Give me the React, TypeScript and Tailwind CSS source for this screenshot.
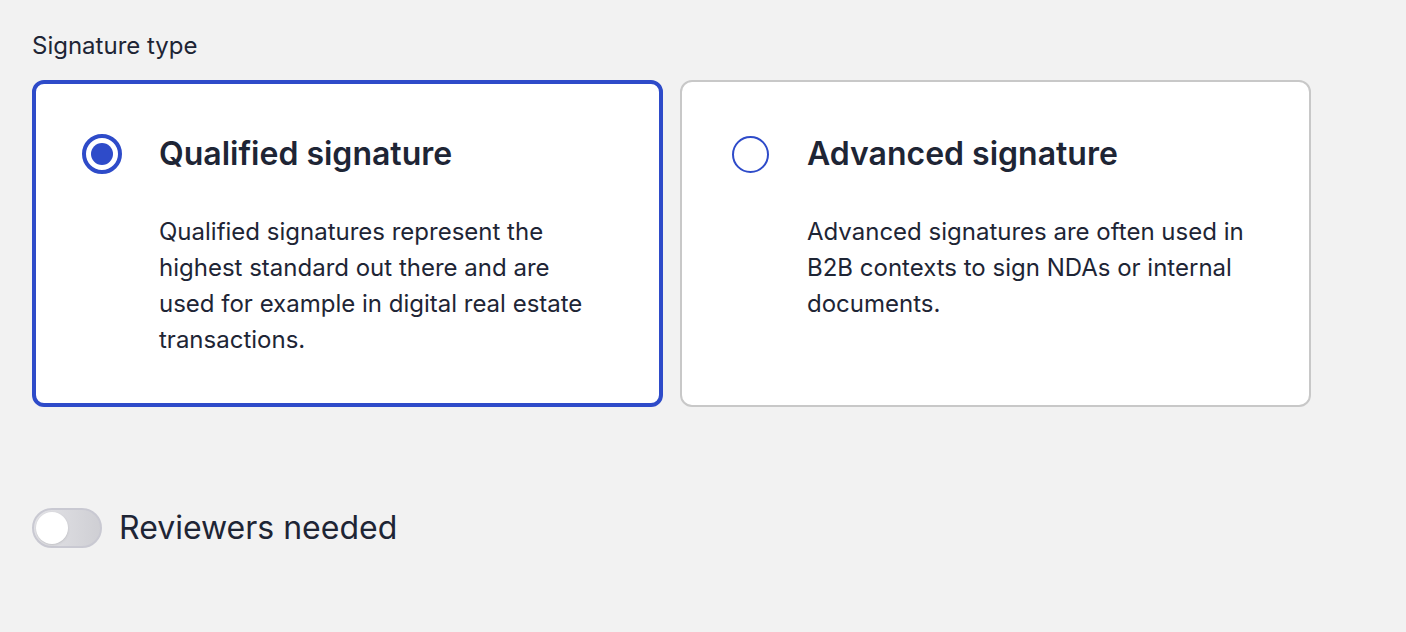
import { useState } from "react";

type Option = {
  id: string;
  title: string;
  body: string;
};

const OPTIONS: Option[] = [
  {
    id: "qualified",
    title: "Qualified signature",
    body: "Qualified signatures represent the highest standard out there and are used for example in digital real estate transactions.",
  },
  {
    id: "advanced",
    title: "Advanced signature",
    body: "Advanced signatures are often used in B2B contexts to sign NDAs or internal documents.",
  },
];

function Radio({ checked }: { checked: boolean }) {
  if (checked) {
    return (
      <span className="flex h-10 w-10 items-center justify-center rounded-full border-4 border-[#2e4bc9] bg-white">
        <span className="h-[22px] w-[22px] rounded-full bg-[#2e4bc9]" />
      </span>
    );
  }
  return (
    <span className="flex h-10 w-10 items-center justify-center">
      <span className="h-[37px] w-[37px] rounded-full border-2 border-[#2e4bc9] bg-white" />
    </span>
  );
}

export default function App() {
  const [selected, setSelected] = useState("qualified");
  const [reviewers, setReviewers] = useState(false);

  return (
    <div
      className="min-h-screen bg-[#f2f2f2] px-8 pt-[30px] text-[#1e2535]"
      style={{ fontFamily: "Inter, 'Noto Sans', sans-serif" }}
    >
      <div className="text-[24px] leading-8">Signature type</div>

      <div className="mt-[18px] flex gap-[17px]">
        {OPTIONS.map((opt) => {
          const active = selected === opt.id;
          return (
            <button
              key={opt.id}
              type="button"
              onClick={() => setSelected(opt.id)}
              className={
                active
                  ? "flex h-[327px] w-[631px] gap-[37px] rounded-xl border-4 border-[#2e4bc9] bg-white px-[46px] pt-[50px] text-left"
                  : "flex h-[327px] w-[631px] gap-[37px] rounded-xl border-2 border-[#c8c8c8] bg-white px-[48px] pt-[52px] text-left"
              }
            >
              <div>
                <Radio checked={active} />
              </div>
              <div className="flex-1">
                <div className="text-[32px] font-semibold leading-10">{opt.title}</div>
                <p className="mt-10 max-w-[446px] text-[24px] leading-9">{opt.body}</p>
              </div>
            </button>
          );
        })}
      </div>

      <div className="mt-[101px] flex items-center gap-[17px]">
        <button
          type="button"
          onClick={() => setReviewers(!reviewers)}
          className="relative h-10 w-[70px] rounded-full border-2 border-[#c9c9d2] bg-gradient-to-r from-[#e4e4e8] to-[#cfcfd4]"
        >
          <span
            className={
              reviewers
                ? "absolute left-[32px] top-[2px] h-8 w-8 rounded-full bg-white shadow"
                : "absolute left-[2px] top-[2px] h-8 w-8 rounded-full bg-white shadow"
            }
          />
        </button>
        <span className="text-[32px] leading-10">Reviewers needed</span>
      </div>
    </div>
  );
}
